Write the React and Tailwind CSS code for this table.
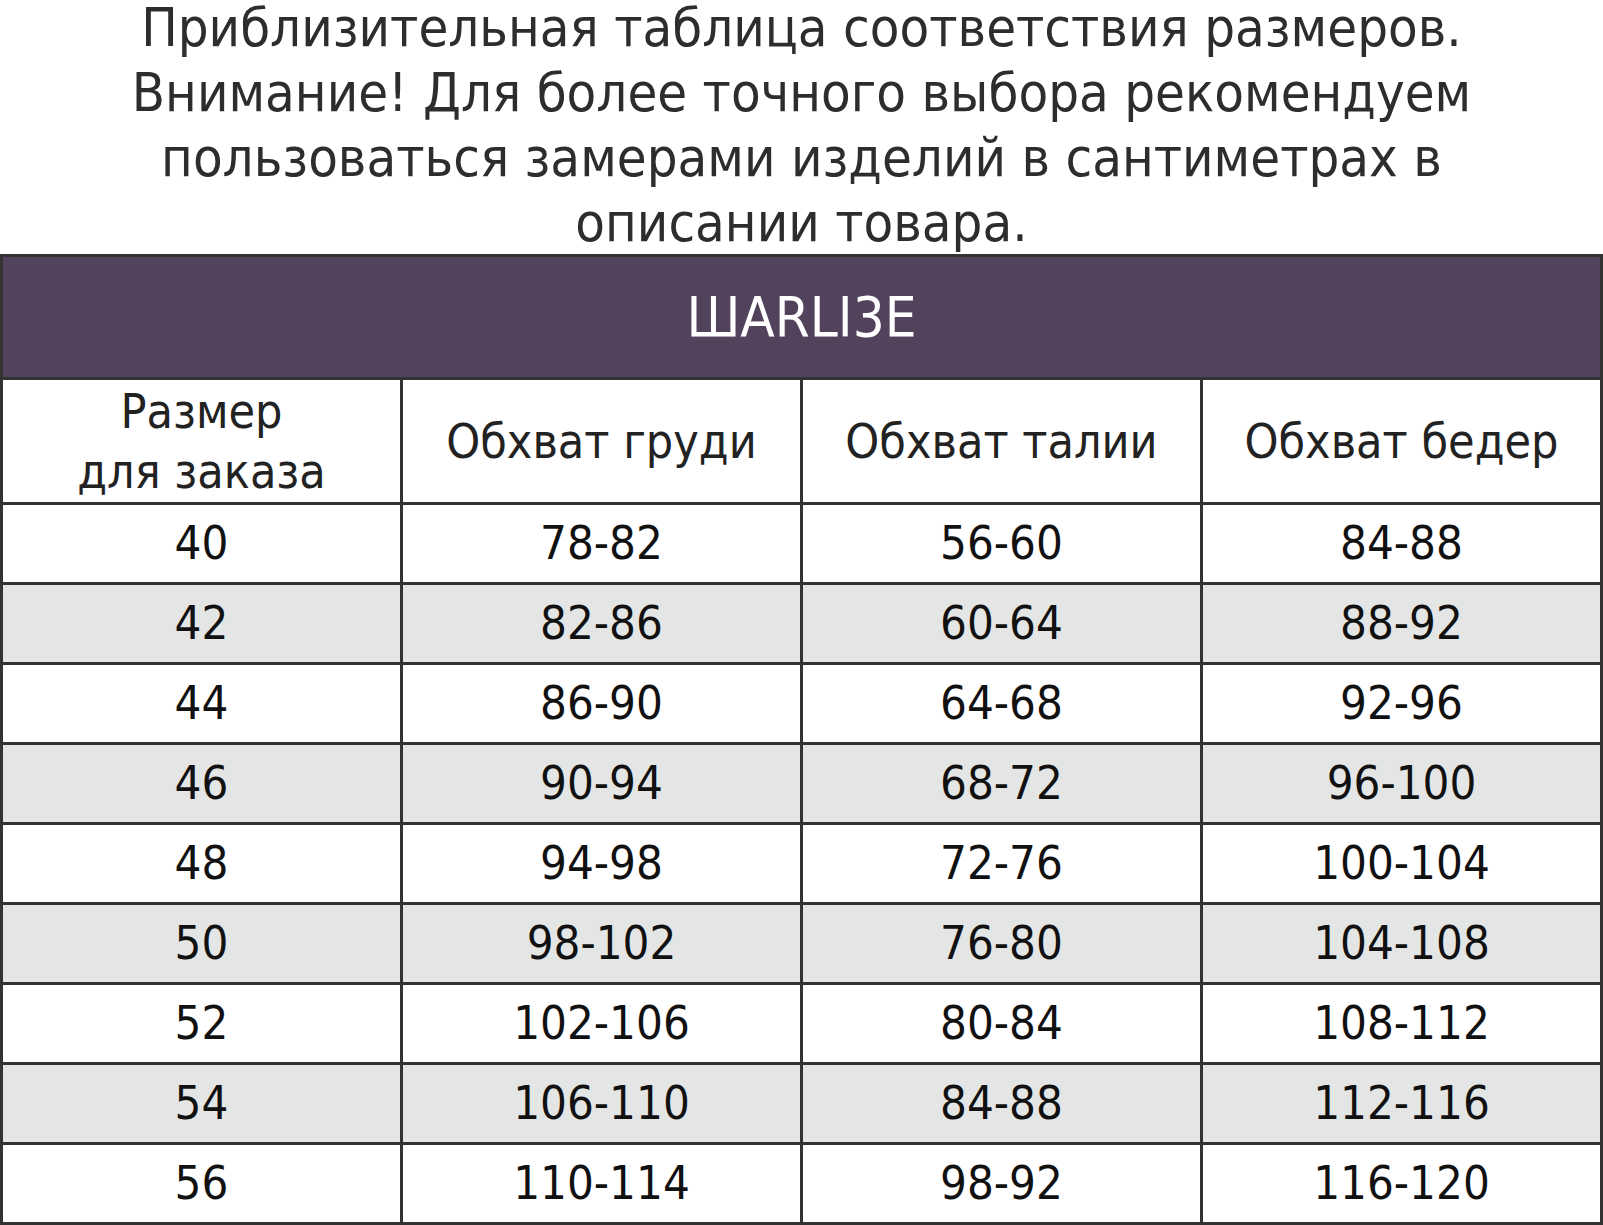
import React from "react";

const rows = [
  ["40", "78-82", "56-60", "84-88"],
  ["42", "82-86", "60-64", "88-92"],
  ["44", "86-90", "64-68", "92-96"],
  ["46", "90-94", "68-72", "96-100"],
  ["48", "94-98", "72-76", "100-104"],
  ["50", "98-102", "76-80", "104-108"],
  ["52", "102-106", "80-84", "108-112"],
  ["54", "106-110", "84-88", "112-116"],
  ["56", "110-114", "98-92", "116-120"],
];

const font = {
  fontFamily: '"Liberation Sans Narrow", "DejaVu Sans Condensed", "Liberation Sans", sans-serif',
};

const Cell = ({ children, first }) => (
  <div
    className={
      "flex-1 flex items-center justify-center text-center " +
      (first ? "" : "border-l-[3px] border-[#333]")
    }
  >
    {children}
  </div>
);

export default function App() {
  return (
    <div className="w-[1603px] h-[1225px] bg-white overflow-hidden flex flex-col" style={font}>
      <div className="h-[254px] shrink-0 text-center text-[#2d2d2d] text-[54px] leading-[65px]">
        <p className="-mt-[5px]">
          Приблизительная таблица соответствия размеров.
          <br />
          Внимание! Для более точного выбора рекомендуем
          <br />
          пользоваться замерами изделий в сантиметрах в
          <br />
          описании товара.
        </p>
      </div>

      <div className="border-[3px] border-[#333] flex-1 flex flex-col">
        <div className="h-[123px] shrink-0 bg-[#52425c] border-b-[3px] border-[#333] flex items-center justify-center text-white text-[56px]">
          ШARLI3E
        </div>
        <div className="h-[122px] shrink-0 flex text-[#222] text-[48px] leading-[60px]">
          <Cell first>
            <span>
              Размер
              <br />
              для заказа
            </span>
          </Cell>
          <Cell>Обхват груди</Cell>
          <Cell>Обхват талии</Cell>
          <Cell>Обхват бедер</Cell>
        </div>
        {rows.map((r, i) => (
          <div
            key={r[0]}
            className={
              "flex-1 flex border-t-[3px] border-[#333] text-[#111] text-[47px] " +
              (i % 2 === 1 ? "bg-[#e4e6e5]" : "bg-white")
            }
          >
            {r.map((v, j) => (
              <Cell key={j} first={j === 0}>
                {v}
              </Cell>
            ))}
          </div>
        ))}
      </div>
    </div>
  );
}
